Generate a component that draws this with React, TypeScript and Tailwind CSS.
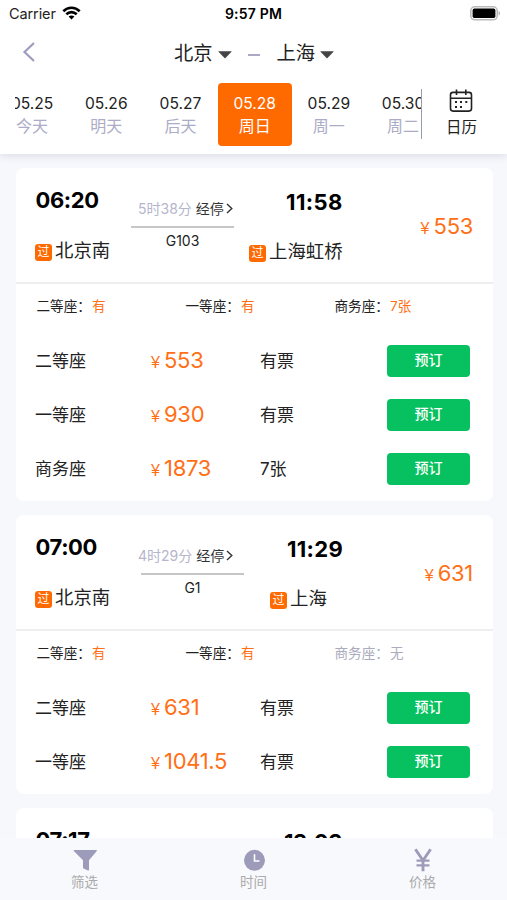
import React from 'react';
import clsx from 'clsx';

interface Seat {
  name: string;
  price: string;
  left: string;
}

interface Train {
  depart: string;
  arrive: string;
  arriveClass: string;
  route?: {
    code: string;
    from: string;
    to: string;
    duration: string;
    price: string;
    lineClass: string;
    toClass: string;
  };
  summary: { name: string; value: string }[];
  seats: Seat[];
}

const days = [
  { date: '05.25', label: '今天' },
  { date: '05.26', label: '明天' },
  { date: '05.27', label: '后天' },
  { date: '05.28', label: '周日', active: true },
  { date: '05.29', label: '周一' },
  { date: '05.30', label: '周二' },
];

const trains: Train[] = [
  {
    depart: '06:20',
    arrive: '11:58',
    arriveClass: 'ml-[50px] tracking-[0.4px]',
    route: {
      code: 'G103',
      from: '北京南',
      to: '上海虹桥',
      duration: '5时38分',
      price: '553',
      lineClass: 'ml-0',
      toClass: 'ml-[13px]',
    },
    summary: [
      { name: '二等座', value: '有' },
      { name: '一等座', value: '有' },
      { name: '商务座', value: '7张' },
    ],
    seats: [
      { name: '二等座', price: '553', left: '有票' },
      { name: '一等座', price: '930', left: '有票' },
      { name: '商务座', price: '1873', left: '7张' },
    ],
  },
  {
    depart: '07:00',
    arrive: '11:29',
    arriveClass: 'ml-[51px] tracking-[0.3px]',
    route: {
      code: 'G1',
      from: '北京南',
      to: '上海',
      duration: '4时29分',
      price: '631',
      lineClass: 'ml-[10px]',
      toClass: 'ml-[34px]',
    },
    summary: [
      { name: '二等座', value: '有' },
      { name: '一等座', value: '有' },
      { name: '商务座', value: '无' },
    ],
    seats: [
      { name: '二等座', price: '631', left: '有票' },
      { name: '一等座', price: '1041.5', left: '有票' },
    ],
  },
  // only the top of this card shows above the tab bar
  {
    depart: '07:17',
    arrive: '13:03',
    arriveClass: 'ml-[48px] tracking-[-0.4px]',
    summary: [],
    seats: [],
  },
];

const StatusBar = () => (
  <div className="flex h-7 shrink-0 items-center justify-between pl-[9px] pr-[6px]">
    <div className="flex w-[120px] items-center gap-[6px]">
      <span className="text-[14.5px] tracking-[-0.1px] text-[#222]">Carrier</span>
      <svg className="-mt-[2px]" width="19" height="14" viewBox="0 0 19 14" fill="none" stroke="#000" strokeWidth="2.6">
        <path d="M1.3 5.2C6 .6 13 .6 17.7 5.2" />
        <path d="M4.3 8.3c3-2.9 7.4-2.9 10.4 0" />
        <path d="M9.5 13.6 6.6 10.6c1.7-1.5 4.1-1.5 5.8 0z" fill="#000" stroke="none" />
      </svg>
    </div>
    <span className="-mt-[2px] -ml-[3px] text-[14px] font-semibold tracking-[0.2px] text-black">9:57 PM</span>
    <div className="flex w-[120px] items-center justify-end">
      <svg className="-mt-[2px]" width="31" height="15" viewBox="0 0 31 15">
        <rect x=".8" y=".8" width="26.4" height="13" rx="4" fill="#fff" stroke="#bbb" strokeWidth="1.6" />
        <rect x="2.6" y="2.6" width="22.8" height="9.4" rx="1.8" fill="#000" />
        <path d="M28.6 5v4.6c1.8-.6 1.8-4 0-4.6z" fill="#aaa" />
      </svg>
    </div>
  </div>
);

const Caret = () => (
  <svg width="14" height="8" viewBox="0 0 14 8" fill="#444">
    <path d="M.7.3h12.6q.6 0 .2.5L7.5 7q-.5.5-1 0L.5.8Q.1.3.7.3z" />
  </svg>
);

const Header = () => (
  <div className="flex h-[54px] shrink-0 items-center pb-[4px] pl-[22px]">
    <svg className="-mt-[2px]" width="14" height="20" viewBox="0 0 14 20" fill="none" stroke="#9c9cbe" strokeWidth="2.2">
      <path d="M12 1 2.5 10 12 19" />
    </svg>
    <div className="ml-[138px] flex items-center text-[19.3px] leading-[26px] text-[#222]">
      <span>北京</span>
      <span className="ml-[5px] pt-[4px]"><Caret /></span>
      <span className="ml-[16px] mt-[4px] h-[2px] w-[12px] bg-[#aaaac6]" />
      <span className="ml-[17px]">上海</span>
      <span className="ml-[5px] pt-[4px]"><Caret /></span>
    </div>
  </div>
);

const DateStrip = () => (
  <div className="flex h-[72px] shrink-0 pl-[15px]">
    <div className="flex h-full w-[407px] overflow-hidden">
      <div className="-ml-[20px] flex shrink-0 pt-[1px]">
        {days.map((day) => (
          <div
            key={day.date}
            className={clsx(
              'flex h-[63px] w-[74.2px] shrink-0 flex-col items-center rounded-[4px] pt-[10px]',
              day.active ? 'bg-[#ff6a00] text-white' : 'text-[#222]'
            )}
          >
            <span className="text-[15.6px] leading-[21px]">{day.date}</span>
            <span className={clsx('mt-[1px] text-[16px] leading-[22px]', !day.active && 'text-[#abacc6]')}>{day.label}</span>
          </div>
        ))}
      </div>
    </div>
    <div className="-ml-px mt-[7px] h-[50px] w-px bg-[#9b9bae]" />
    <div className="ml-[23px] flex w-[34px] flex-col items-center pt-[7px] text-[#222]">
      <svg className="-ml-[2px]" width="24" height="24" viewBox="0 0 24 24" fill="none" stroke="#222" strokeWidth="1.6">
        <rect x="1.5" y="3.4" width="21" height="18.7" rx="2.5" />
        <path d="M1.5 9.2h21M7.5 .6v5.5M16.8 .6v5.5" />
        <path d="M11 13h2M16.3 13h2M6 13h2M6 17.9h2M11 17.9h2" strokeWidth="2" />
      </svg>
      <span className="-ml-[1px] mt-[3px] text-[15.5px] leading-[23px]">日历</span>
    </div>
  </div>
);

const Station = ({ name }: { name: string }) => (
  <div className="flex h-[26px] items-center whitespace-nowrap">
    <span className="mt-[4px] flex size-[17px] items-center justify-center rounded-[3px] bg-[#ff6a00] text-[12px] leading-none text-white">过</span>
    <span className="ml-[3px] text-[18.4px] leading-[26px] text-[#222]">{name}</span>
  </div>
);

const Price = ({ value }: { value: string }) => (
  <div className="flex items-baseline whitespace-nowrap text-[#ff6f16]">
    <span className="w-[13px] font-['Liberation_Sans'] text-[16px]">¥</span>
    <span className="text-[22px] leading-[28px] tracking-[-0.3px]">{value}</span>
  </div>
);

const TrainCard = ({ train: { depart, arrive, arriveClass, route, summary, seats } }: { train: Train }) => (
  <div className="shrink-0 rounded-[8px] bg-white pb-[5px]">
    <div className="flex h-[116px] border-b-2 border-[#eeeef0] pl-[20px] pr-[20px]">
      <div className="w-[95px] shrink-0 pt-[18px]">
        <div className="-ml-[0.5px] text-[22px] font-bold leading-[28px] tracking-[-0.4px] text-black">{depart}</div>
        {route && <div className="-ml-[1px] mt-[23px]"><Station name={route.from} /></div>}
      </div>
      <div className="w-[105px] shrink-0 pt-[30px]">
        {route && (
          <>
            <div className="flex h-[20px] items-center whitespace-nowrap pl-[7px] text-[14px]">
              <span className="text-[#b5b5cc]">{route.duration}</span>
              <span className="ml-[4px] text-[#333]">经停</span>
              <svg className="ml-[2px]" width="7" height="11" viewBox="0 0 7 11" fill="none" stroke="#333" strokeWidth="1.4">
                <path d="m1 1 4.8 4.5L1 10" />
              </svg>
            </div>
            <div className={clsx('mt-[8px] w-[103px] border-t-2 border-[#c6c6c8] pt-[3px] text-center text-[14px] leading-[20px] text-[#222]', route.lineClass)}>
              {route.code}
            </div>
          </>
        )}
      </div>
      <div className="w-[140px] shrink-0 pt-[20px]">
        <div className={clsx('text-[22px] font-bold leading-[28px] text-black', arriveClass)}>{arrive}</div>
        {route && <div className={clsx('mt-[22px]', route.toClass)}><Station name={route.to} /></div>}
      </div>
      {route && (
        <div className="flex flex-1 justify-end pt-[44px]">
          <Price value={route.price} />
        </div>
      )}
    </div>
    {summary.length > 0 && (
      <div className="flex h-[50px] pl-[20.5px] pt-[12px] text-[13.6px] leading-[20px]">
        {summary.map((item) => (
          <div key={item.name} className={clsx('flex w-[149px] shrink-0', item.value === '无' ? 'text-[#abacbe]' : 'text-[#222]')}>
            <span className="w-[55.5px]">{item.name}：</span>
            <span className={item.value === '无' ? '' : 'text-[#ff6f16]'}>{item.value}</span>
          </div>
        ))}
      </div>
    )}
    {seats.map((seat) => (
      <div key={seat.name} className="flex h-[54px] items-center pb-px pl-[19px] text-[17px] text-[#222]">
        <span className="w-[116px] pt-[2px]">{seat.name}</span>
        <div className="w-[109px]"><Price value={seat.price} /></div>
        <span className="w-[127px] pt-[2px]">{seat.left}</span>
        <button className="h-[32px] w-[83px] rounded-[4px] bg-[#07c160] pb-[2px] text-[14px] font-medium text-white">预订</button>
      </div>
    ))}
  </div>
);

const TabBar = () => (
  <div className="grid h-[62px] shrink-0 grid-cols-3 bg-[#f8f9fd] text-[13.5px] leading-[20px] text-[#aaa]">
    <div className="flex flex-col items-center pt-[10px]">
      <svg width="26" height="24" viewBox="0 0 26 24" fill="#9c9cba">
        <path d="M2.3 2h22q1 0 .5 1L17 12.2v9.3q0 1.2-1 .9l-4.5-1.8q-.5-.2-.5-1v-7.4L1.8 3q-.5-1 .5-1z" />
      </svg>
      <span>筛选</span>
    </div>
    <div className="flex flex-col items-center pt-[10px]">
      <svg width="24" height="24" viewBox="0 0 24 24" fill="none">
        <circle cx="12.5" cy="12.3" r="10.5" fill="#9c9cba" />
        <path d="M12.5 6.3v6.7h5" stroke="#fff" strokeWidth="1.6" />
      </svg>
      <span>时间</span>
    </div>
    <div className="flex flex-col items-center pt-[10px]">
      <svg width="24" height="24" viewBox="0 0 24 24" fill="none" stroke="#9c9cba" strokeWidth="2.9">
        <path d="m4.4 1.2 7.6 11.3 7.6-11.3M12 12v11.3" />
        <path d="M5.5 12.7h13M5.5 17.4h13" strokeWidth="2.2" />
      </svg>
      <span>价格</span>
    </div>
  </div>
);

const App: React.FC = () => (
  <div className="flex h-[900px] w-[507px] flex-col overflow-hidden bg-[#f7f8fc] font-[Inter,'Noto_Sans_CJK_SC',sans-serif]">
    <div className="flex h-[154px] shrink-0 flex-col bg-white shadow-[0_2px_8px_rgba(50,50,90,0.13)]">
      <StatusBar />
      <Header />
      <DateStrip />
    </div>
    <div className="flex min-h-0 flex-1 flex-col gap-[14px] overflow-hidden pl-[16px] pr-[14px] pt-[14px]">
      {trains.map((train) => (
        <TrainCard key={train.depart} train={train} />
      ))}
    </div>
    <TabBar />
  </div>
);

export default App;
